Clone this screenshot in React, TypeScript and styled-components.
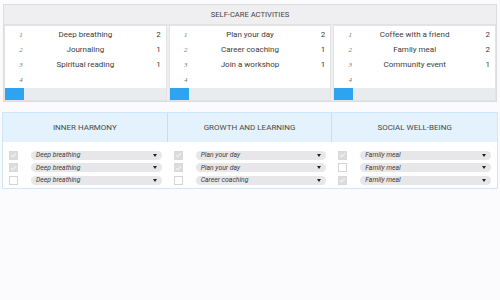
import React from "react";
import styled, { createGlobalStyle } from "styled-components";

const GlobalStyle = createGlobalStyle`
  html, body {
    margin: 0;
    padding: 0;
    background: #fbfafc;
    font-family: Roboto, "Liberation Sans", sans-serif;
    color: #444;
  }
`;

const lists = [
  [
    { label: "Deep breathing", count: 2 },
    { label: "Journaling", count: 1 },
    { label: "Spiritual reading", count: 1 },
  ],
  [
    { label: "Plan your day", count: 2 },
    { label: "Career coaching", count: 1 },
    { label: "Join a workshop", count: 1 },
  ],
  [
    { label: "Coffee with a friend", count: 2 },
    { label: "Family meal", count: 2 },
    { label: "Community event", count: 1 },
  ],
];

const groups = [
  {
    title: "Inner Harmony",
    rows: [
      { checked: true, value: "Deep breathing" },
      { checked: true, value: "Deep breathing" },
      { checked: false, value: "Deep breathing" },
    ],
  },
  {
    title: "Growth and Learning",
    rows: [
      { checked: true, value: "Plan your day" },
      { checked: true, value: "Plan your day" },
      { checked: false, value: "Career coaching" },
    ],
  },
  {
    title: "Social Well-being",
    rows: [
      { checked: true, value: "Family meal" },
      { checked: false, value: "Family meal" },
      { checked: true, value: "Family meal" },
    ],
  },
];

export default function App() {
  return (
    <>
      <GlobalStyle />
      <Page>
        <ActivitiesPanel>
          <PanelHeader>Self-care activities</PanelHeader>
          <ListGrid>
            {lists.map((items, i) => (
              <ListColumn key={i}>
                {items.map((item, n) => (
                  <ListRow key={n}>
                    <Index>{n + 1}</Index>
                    <Label>{item.label}</Label>
                    <Count>{item.count}</Count>
                  </ListRow>
                ))}
                <ListRow>
                  <Index>{items.length + 1}</Index>
                  <Label />
                  <Count />
                </ListRow>
                <Bar>
                  <BarFill />
                </Bar>
              </ListColumn>
            ))}
          </ListGrid>
        </ActivitiesPanel>

        <PlanPanel>
          <PlanGrid>
            {groups.map((g) => (
              <PlanHeader key={g.title}>{g.title}</PlanHeader>
            ))}
            {groups.map((g) => (
              <PlanColumn key={g.title + "-body"}>
                {g.rows.map((r, i) => (
                  <PlanRow key={i}>
                    <Check $checked={r.checked}>
                      {r.checked && (
                        <svg width="8" height="8" viewBox="0 0 8 8">
                          <path
                            d="M1.3 4.2 L3.2 6 L6.8 2"
                            fill="none"
                            stroke="#ffffff"
                            strokeWidth="1.1"
                          />
                        </svg>
                      )}
                    </Check>
                    <Select>
                      <span>{r.value}</span>
                      <Caret />
                    </Select>
                  </PlanRow>
                ))}
              </PlanColumn>
            ))}
          </PlanGrid>
        </PlanPanel>
      </Page>
    </>
  );
}

const Page = styled.div`
  padding: 4px 3px;
  display: flex;
  flex-direction: column;
  gap: 10px;
`;

const ActivitiesPanel = styled.section`
  border: 1px solid #dcdcdf;
  background: #efeff1;
`;

const PanelHeader = styled.div`
  height: 19px;
  display: flex;
  align-items: center;
  justify-content: center;
  font-size: 7.6px;
  text-transform: uppercase;
  color: #444;
  border-bottom: 1px solid #e2e2e5;
`;

const ListGrid = styled.div`
  display: grid;
  grid-template-columns: repeat(3, 1fr);
  gap: 2px;
`;

const ListColumn = styled.div`
  background: #fff;
  border: 1px solid #e3e3e6;
  padding-top: 1px;
  display: flex;
  flex-direction: column;
`;

const ListRow = styled.div`
  height: 15px;
  display: grid;
  grid-template-columns: 30px 1fr 30px;
  align-items: center;
  font-size: 8px;
  color: #3c3c3c;
`;

const Index = styled.span`
  font-style: italic;
  font-family: "Liberation Serif", serif;
  font-size: 7px;
  color: #777;
  text-align: center;
  padding-left: 2px;
`;

const Label = styled.span`
  text-align: center;
`;

const Count = styled.span`
  text-align: right;
  padding-right: 5px;
`;

const Bar = styled.div`
  margin-top: 1px;
  height: 12px;
  background: #e9ecef;
  display: flex;
`;

const BarFill = styled.div`
  width: 19px;
  background: #2ea4f0;
`;

const PlanPanel = styled.section`
  height: 75px;
  overflow: hidden;
  border: 1px solid #cfe6f8;
  background: #fff;
  margin: 0 -1px;
`;

const PlanGrid = styled.div`
  display: grid;
  grid-template-columns: repeat(3, 1fr);
`;

const PlanHeader = styled.div`
  height: 29px;
  background: #e3f2fd;
  border-right: 1px solid #bfe0f8;
  display: flex;
  align-items: center;
  justify-content: center;
  font-size: 8px;
  text-transform: uppercase;
  color: #4a4a4a;
  &:nth-child(3) {
    border-right: none;
  }
`;

const PlanColumn = styled.div`
  padding: 7px 6px 0 6px;
  display: flex;
  flex-direction: column;
`;

const PlanRow = styled.div`
  height: 12.5px;
  display: flex;
  align-items: center;
  gap: 13px;
`;

const Check = styled.span<{ $checked: boolean }>`
  width: 9px;
  height: 9px;
  flex: none;
  box-sizing: border-box;
  border: 1px solid ${(p) => (p.$checked ? "#d9d9dc" : "#d4d4d6")};
  background: ${(p) => (p.$checked ? "#dcdcdf" : "#fff")};
  display: flex;
  align-items: center;
  justify-content: center;
`;

const Select = styled.div`
  flex: 1;
  height: 9px;
  border-radius: 5px;
  background: #e7e7ea;
  display: flex;
  align-items: center;
  justify-content: space-between;
  padding: 0 5px;
  font-size: 6.8px;
  font-style: italic;
  color: #3c3c3c;
`;

const Caret = styled.span`
  width: 0;
  height: 0;
  border-left: 2.5px solid transparent;
  border-right: 2.5px solid transparent;
  border-top: 3px solid #222;
`;
